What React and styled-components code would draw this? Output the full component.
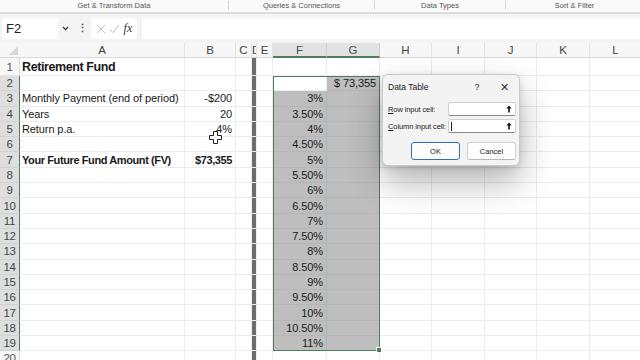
import React from 'react';
import styled, { createGlobalStyle } from 'styled-components';

const GlobalStyle = createGlobalStyle`
  html, body {
    margin: 0;
    padding: 0;
    background: #ffffff;
    overflow: hidden;
  }
  body {
    font-family: "Liberation Sans", Arial, sans-serif;
    color: #222;
  }
`;

const COLS = [20, 165, 51, 16, 5, 16, 54, 53, 52, 53, 52, 53, 52];
const LETTERS = ['A', 'B', 'C', 'D', 'E', 'F', 'G', 'H', 'I', 'J', 'K', 'L'];
const RATES = ['3%', '3.50%', '4%', '4.50%', '5%', '5.50%', '6%', '6.50%', '7%', '7.50%', '8%', '8.50%', '9%', '9.50%', '10%', '10.50%', '11%'];
const GREEN = '#4f7d5f';

const Page = styled.div`
  position: relative;
  width: 640px;
  height: 360px;
  overflow: hidden;
`;

const RibbonGroups = styled.div`
  display: flex;
  height: 12px;
  background: #fafafa;
  border-bottom: 2px solid #dcdcdc;
  box-shadow: 0 1px 2px rgba(0, 0, 0, 0.08);
`;

const Group = styled.div`
  width: ${(p) => p.$w}px;
  flex: none;
  display: flex;
  align-items: center;
  justify-content: center;
  font-size: 7.5px;
  color: #555;
  border-right: ${(p) => (p.$last ? 'none' : '1px solid #d4d4d4')};
  height: 9px;
  margin-top: 1px;
`;

const FormulaBar = styled.div`
  display: flex;
  align-items: center;
  height: 29px;
  background: #f4f4f4;
  padding: 0 0 0 2px;
`;

const NameBox = styled.div`
  width: 56px;
  height: 21px;
  background: #fff;
  border-radius: 3px;
  display: flex;
  align-items: center;
  padding-left: 4px;
  box-sizing: border-box;
  font-size: 13px;
  color: #222;
`;

const Chevron = styled.div`
  width: 12px;
  margin-left: 1px;
  display: flex;
  justify-content: center;
`;

const Dots = styled.div`
  width: 12px;
  margin-left: 5px;
  display: flex;
  justify-content: center;
  font-size: 11px;
  font-weight: bold;
  color: #555;
`;

const FxBox = styled.div`
  width: 46px;
  height: 21px;
  margin-left: 3px;
  background: #fff;
  border-radius: 3px;
  display: flex;
  align-items: center;
  justify-content: space-around;
  padding: 0 3px;
  box-sizing: border-box;
`;

const Fx = styled.span`
  font-family: "Liberation Serif", serif;
  font-style: italic;
  font-size: 12px;
  color: #333;
`;

const FormulaInput = styled.div`
  flex: 1;
  height: 21px;
  margin-left: 5px;
  background: #fff;
`;

const Sheet = styled.div`
  display: grid;
  grid-template-columns: ${COLS.map((c) => c + 'px').join(' ')};
  grid-template-rows: 15px 18px repeat(19, 15.3px);
  background: #fff;
`;

const Corner = styled.div`
  grid-row: 1;
  grid-column: 1;
  background: #f7f7f7;
  border-bottom: 1px solid #dadada;
  position: relative;
  overflow: hidden;
  &::after {
    content: '';
    position: absolute;
    right: 2px;
    bottom: 2px;
    border-left: 9px solid transparent;
    border-bottom: 9px solid #d8d8d8;
  }
`;

const ColHead = styled.div`
  grid-row: 1;
  grid-column: ${(p) => p.$c};
  background: ${(p) => (p.$sel ? '#e2e2e2' : '#f7f7f7')};
  border-bottom: ${(p) => (p.$sel ? `2px solid ${GREEN}` : '1px solid #dadada')};
  border-right: 1px solid ${(p) => (p.$sel ? '#cfcfcf' : '#e4e4e4')};
  box-sizing: border-box;
  display: flex;
  align-items: center;
  justify-content: ${(p) => (p.$clip ? 'flex-start' : 'center')};
  overflow: hidden;
  font-size: 11.5px;
  color: ${(p) => (p.$sel ? '#3d5a47' : '#444')};
  padding-top: ${(p) => (p.$sel ? '1px' : '0')};
`;

const RowHead = styled.div`
  grid-row: ${(p) => p.$r};
  grid-column: 1;
  background: ${(p) => (p.$sel ? '#dedede' : '#f7f7f7')};
  border-right: ${(p) => (p.$sel ? `1px solid ${GREEN}` : '1px solid #dadada')};
  border-bottom: 1px solid ${(p) => (p.$sel ? '#d2d2d2' : '#e6e6e6')};
  box-sizing: border-box;
  display: flex;
  align-items: center;
  justify-content: center;
  font-size: 11.5px;
  letter-spacing: -0.3px;
  color: ${(p) => (p.$sel ? '#3d4a42' : '#555')};
`;

const Cell = styled.div`
  grid-row: ${(p) => p.$r};
  grid-column: ${(p) => p.$c};
  box-sizing: border-box;
  border-right: 1px solid ${(p) => (p.$sel ? '#b3b3b3' : '#ececec')};
  border-bottom: 1px solid ${(p) => (p.$sel ? '#b6b6b6' : '#ececec')};
  background: ${(p) => (p.$dark ? '#6c6c6c' : p.$sel ? '#bebebe' : '#fff')};
  display: flex;
  align-items: center;
  justify-content: ${(p) => (p.$right ? 'flex-end' : 'flex-start')};
  padding: ${(p) => (p.$right ? '0 3px 0 0' : '0 0 0 2px')};
  white-space: nowrap;
  font-size: ${(p) => (p.$title ? '12.5px' : '11px')};
  font-weight: ${(p) => (p.$bold ? 'bold' : 'normal')};
  letter-spacing: ${(p) => (p.$bold ? '-0.4px' : '-0.1px')};
  color: #1a1a1a;
`;

const Selection = styled.div`
  grid-column: 7 / 9;
  grid-row: 3 / 21;
  border: 1px solid ${GREEN};
  pointer-events: none;
  position: relative;
  z-index: 2;
`;

const FillHandle = styled.div`
  position: absolute;
  right: -3px;
  bottom: -3px;
  width: 4px;
  height: 4px;
  background: ${GREEN};
  border: 1px solid #fff;
`;

const Cursor = styled.svg`
  position: absolute;
  left: 209px;
  top: 131px;
  z-index: 5;
`;

const Dialog = styled.div`
  position: absolute;
  left: 382px;
  top: 74px;
  width: 138px;
  height: 92px;
  box-sizing: border-box;
  background: #f3f3f3;
  border: 1px solid #c9c9c9;
  border-radius: 6px;
  box-shadow: 0 16px 34px rgba(0, 0, 0, 0.3), 0 2px 6px rgba(0, 0, 0, 0.12);
  z-index: 10;
  display: flex;
  flex-direction: column;
  padding: 0 3px 0 5px;
  font-size: 8px;
  color: #1a1a1a;
`;

const TitleRow = styled.div`
  height: 24px;
  display: flex;
  align-items: center;
  font-size: 8.5px;
`;

const Title = styled.span`
  flex: 1;
`;

const TitleBtn = styled.span`
  width: ${(p) => p.$w}px;
  text-align: center;
  font-size: ${(p) => p.$size}px;
  color: #333;
`;

const Field = styled.div`
  display: flex;
  align-items: center;
  justify-content: space-between;
  height: 14px;
  margin-top: ${(p) => p.$gap}px;
`;

const FieldLabel = styled.span`
  font-size: 7.5px;
  letter-spacing: -0.1px;
`;

const InputBox = styled.div`
  width: 68px;
  height: 14px;
  box-sizing: border-box;
  background: #fff;
  border: 1px solid #d0d0d0;
  border-bottom-color: #8a8a8a;
  border-radius: 2px;
  display: flex;
  align-items: center;
  justify-content: space-between;
  padding: 0 3px 0 2px;
`;

const Caret = styled.span`
  width: 1px;
  height: 9px;
  background: ${(p) => (p.$show ? '#222' : 'transparent')};
`;

const Buttons = styled.div`
  display: flex;
  justify-content: flex-end;
  gap: 7px;
  margin-top: 9px;
`;

const Button = styled.div`
  width: 49px;
  height: 18px;
  box-sizing: border-box;
  background: #fdfdfd;
  border: 1px solid ${(p) => (p.$primary ? '#2f6fc0' : '#d3d3d3')};
  border-bottom-color: ${(p) => (p.$primary ? '#2f6fc0' : '#b8b8b8')};
  border-radius: 3px;
  display: flex;
  align-items: center;
  justify-content: center;
  font-size: 7.5px;
  color: #1a1a1a;
`;

const UpArrow = () => (
  <svg width="6" height="8" viewBox="0 0 6 8">
    <path d="M3 0.5 L5.6 3.5 H3.8 V7.5 H2.2 V3.5 H0.4 Z" fill="#111" />
  </svg>
);

const cellContent = (row, col) => {
  const A = {
    1: 'Retirement Fund',
    3: 'Monthly Payment (end of period)',
    4: 'Years',
    5: 'Return p.a.',
    7: 'Your Future Fund Amount (FV)',
  };
  const B = { 3: '-$200', 4: '20', 5: '4%', 7: '$73,355' };
  if (col === 'A') return A[row];
  if (col === 'B') return B[row];
  if (col === 'G' && row === 2) return '$ 73,355';
  if (col === 'F' && row >= 3 && row <= 19) return RATES[row - 3];
  return undefined;
};

const App = () => {
  const rows = Array.from({ length: 20 }, (_, i) => i + 1);
  return (
    <Page>
      <GlobalStyle />
      <RibbonGroups>
        <Group $w={228}>Get &amp; Transform Data</Group>
        <Group $w={145}>Queries &amp; Connections</Group>
        <Group $w={130}>Data Types</Group>
        <Group $w={137} $last>Sort &amp; Filter</Group>
      </RibbonGroups>
      <FormulaBar>
        <NameBox>F2</NameBox>
        <Chevron>
          <svg width="7" height="5" viewBox="0 0 7 5">
            <path d="M1 1 L3.5 3.6 L6 1" stroke="#333" strokeWidth="1.3" fill="none" />
          </svg>
        </Chevron>
        <Dots>⋮</Dots>
        <FxBox>
          <svg width="10" height="10" viewBox="0 0 10 10">
            <path d="M1 1 L9 9 M9 1 L1 9" stroke="#b5b5b5" strokeWidth="0.9" />
          </svg>
          <svg width="11" height="10" viewBox="0 0 11 10">
            <path d="M1 5.5 L4 8.6 L10 1.2" stroke="#b5b5b5" strokeWidth="0.9" fill="none" />
          </svg>
          <Fx>fx</Fx>
        </FxBox>
        <FormulaInput />
      </FormulaBar>
      <Sheet>
        <Corner />
        {LETTERS.map((l, i) => (
          <ColHead key={l} $c={i + 2} $sel={l === 'F' || l === 'G'} $clip={l === 'D'}>
            {l}
          </ColHead>
        ))}
        {rows.map((r) => (
          <React.Fragment key={r}>
            <RowHead $r={r + 1} $sel={r >= 2 && r <= 19}>{r}</RowHead>
            {LETTERS.map((l, i) => {
              const text = cellContent(r, l);
              const sel = (l === 'F' || l === 'G') && r >= 2 && r <= 19 && !(l === 'F' && r === 2);
              return (
                <Cell
                  key={l}
                  $r={r + 1}
                  $c={i + 2}
                  $sel={sel}
                  $dark={l === 'D'}
                  $right={l !== 'A'}
                  $bold={(l === 'A' && (r === 1 || r === 7)) || (l === 'B' && r === 7)}
                  $title={l === 'A' && r === 1}
                >
                  {text}
                </Cell>
              );
            })}
          </React.Fragment>
        ))}
        <Selection>
          <FillHandle />
        </Selection>
      </Sheet>
      <Cursor width="13" height="13" viewBox="0 0 13 13">
        <path
          d="M4.5 0.5 H8.5 V4.5 H12.5 V8.5 H8.5 V12.5 H4.5 V8.5 H0.5 V4.5 H4.5 Z"
          fill="#fff"
          stroke="#222"
          strokeWidth="1"
        />
      </Cursor>
      <Dialog>
        <TitleRow>
          <Title>Data Table</Title>
          <TitleBtn $w={30} $size={9}>?</TitleBtn>
          <TitleBtn $w={24} $size={11}>✕</TitleBtn>
        </TitleRow>
        <Field $gap={3}>
          <FieldLabel>
            <u>R</u>ow input cell:
          </FieldLabel>
          <InputBox>
            <Caret />
            <UpArrow />
          </InputBox>
        </Field>
        <Field $gap={3}>
          <FieldLabel>
            <u>C</u>olumn input cell:
          </FieldLabel>
          <InputBox>
            <Caret $show />
            <UpArrow />
          </InputBox>
        </Field>
        <Buttons>
          <Button $primary>OK</Button>
          <Button>Cancel</Button>
        </Buttons>
      </Dialog>
    </Page>
  );
};

export default App;
